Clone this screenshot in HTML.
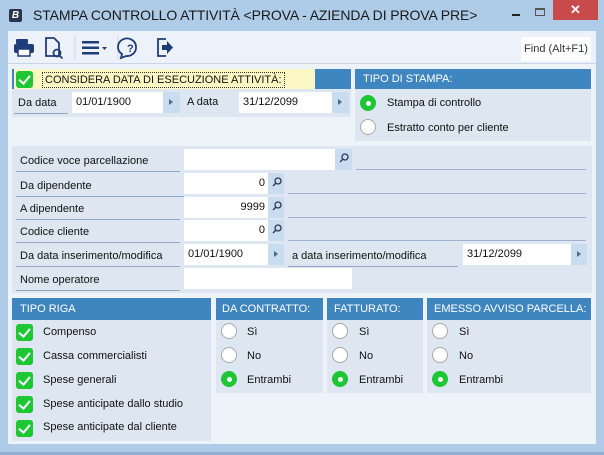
<!DOCTYPE html>
<html><head><meta charset="utf-8"><style>
*{margin:0;padding:0;box-sizing:border-box}
body{width:604px;height:455px;background:#aecbe8;font-family:"Liberation Sans",sans-serif;font-size:11px;color:#111;position:relative;overflow:hidden}
.a{position:absolute;white-space:nowrap}
.hdr{background:#3f86c1;color:#fff;font-size:11px;padding-left:8px;line-height:20px}
.pan{background:#dde6f1}
.inp{background:#fff;padding-left:4px;line-height:21px;font-size:11px}
.btn{background:#c9dcf0}
.btn:after{content:"";position:absolute;left:6px;top:7px;border-left:4px solid #4a6a8a;border-top:3.5px solid transparent;border-bottom:3.5px solid transparent}
.lbl{border-bottom:1px solid #8fa7c7;padding-left:4px;line-height:20px}
.line{border-bottom:1px solid #9fb3cf}
.cb{width:17px;height:17px;background:#1fc634;border-radius:3px}
.cb:after{content:"";position:absolute;left:5px;top:2px;width:5px;height:9px;border:solid #fff;border-width:0 2.2px 2.2px 0;transform:rotate(40deg)}
.rd{width:16px;height:16px;border-radius:50%;background:#fff;border:1.5px solid #a9a9a9}
.rd.on{background:#1fc634;border:none}
.rd.on:after{content:"";position:absolute;left:5.5px;top:5.5px;width:5px;height:5px;border-radius:50%;background:#fff}
.srch{background:#c9dcf0}
</style></head><body>
<!-- title -->
<div class="a" style="left:9px;top:9px;width:13px;height:13px;background:#2a3550;border-radius:2px;color:#fff;font-size:10px;font-style:italic;font-weight:bold;text-align:center;line-height:13px">B</div>
<div class="a" style="left:33px;top:7px;font-size:14px;letter-spacing:-0.1px;color:#1a1a1a">STAMPA CONTROLLO ATTIVITÀ &lt;PROVA - AZIENDA DI PROVA PRE&gt;</div>
<div class="a" style="left:512px;top:14px;width:8px;height:2px;background:#222"></div>
<div class="a" style="left:535px;top:8px;width:10px;height:8px;border:1px solid #555;border-top-width:2px"></div>
<div class="a" style="left:553px;top:0;width:45px;height:20px;background:#c94a4a;color:#fff;text-align:center;font-size:13px;line-height:20px;font-weight:bold">✕</div>
<!-- client -->
<div class="a" style="left:8px;top:31px;width:588px;height:413px;background:#eef3fa"></div>
<div class="a" style="left:8px;top:31px;width:588px;height:33px;background:#edf2fa;border-bottom:1px solid #c8d6e8"></div>
<svg class="a" style="left:12px;top:33px" width="170" height="30" viewBox="0 0 170 30">
<g fill="#1f3d78">
<rect x="4" y="6" width="12" height="5" rx="1"/><rect x="2" y="11" width="20" height="9" rx="2"/><rect x="6" y="16" width="12" height="7" fill="#fff" stroke="#1f3d78" stroke-width="1.5"/>
</g>
<g fill="none" stroke="#1f3d78" stroke-width="1.8"><path d="M34 5h8l5 5v13h-13z"/><circle cx="45" cy="20" r="3.5"/><path d="M47.5 22.5l3 3"/></g>
<line x1="63" y1="3" x2="63" y2="27" stroke="#cbd5e3"/>
<g fill="#1f3d78"><rect x="70" y="8" width="17" height="2.5"/><rect x="70" y="13.5" width="17" height="2.5"/><rect x="70" y="19" width="17" height="2.5"/><path d="M90 14h5l-2.5 3z"/></g>
<line x1="106" y1="3" x2="106" y2="27" stroke="#cbd5e3"/>
<g fill="none" stroke="#1f3d78" stroke-width="1.8"><path d="M124 14a9 8.5 0 1 0-14 7l-1 4 5-2a9 8.5 0 0 0 10-9z"/></g>
<text x="115" y="19" font-size="11" font-weight="bold" fill="#1f3d78" font-family="Liberation Sans">?</text>
<g fill="none" stroke="#1f3d78" stroke-width="1.8"><path d="M154 6h-8v17h8"/></g><path d="M150 12h5v-4l6 6.5-6 6.5v-4h-5z" fill="#1f3d78"/>
</svg>
<div class="a" style="left:521px;top:37px;width:70px;height:24px;background:#fff;font-size:11px;line-height:24px;text-align:center;color:#333">Find (Alt+F1)</div>
<!-- section 1 -->
<div class="a" style="left:12px;top:69px;width:339px;height:20px;background:#3f86c1"></div>
<div class="a" style="left:14px;top:69px;width:301px;height:20px;background:#fdf7c4"></div>
<div class="a cb" style="left:16px;top:71px"></div>
<div class="a" style="left:42px;top:72px;border:1px dotted #333;padding:0 2px;line-height:14px;font-size:11px">CONSIDERA DATA DI ESECUZIONE ATTIVITÀ:</div>
<div class="a pan" style="left:12px;top:89px;width:339px;height:28px"></div>
<div class="a lbl" style="left:14px;top:93px;width:54px">Da data</div>
<div class="a inp" style="left:72px;top:92px;width:92px;height:21px">01/01/1900</div>
<div class="a btn" style="left:163px;top:92px;width:17px;height:21px"></div>
<div class="a" style="left:187px;top:96px">A data</div>
<div class="a inp" style="left:239px;top:92px;width:94px;height:21px">31/12/2099</div>
<div class="a btn" style="left:332px;top:92px;width:17px;height:21px"></div>
<div class="a hdr" style="left:355px;top:69px;width:236px;height:20px">TIPO DI STAMPA:</div>
<div class="a pan" style="left:355px;top:89px;width:236px;height:52px"></div>
<div class="a rd on" style="left:360px;top:95px"></div>
<div class="a" style="left:387px;top:97px">Stampa di controllo</div>
<div class="a rd" style="left:360px;top:119px"></div>
<div class="a" style="left:387px;top:122px">Estratto conto per cliente</div>
<!-- section 2 -->
<div class="a pan" style="left:12px;top:146px;width:580px;height:147px"></div>
<div class="a lbl" style="left:16px;top:151px;width:164px">Codice voce parcellazione</div>
<div class="a inp" style="left:184px;top:149px;width:152px;height:21px"></div>
<div class="a srch" style="left:335px;top:149px;width:17px;height:21px"></div>
<div class="a line" style="left:356px;top:150px;width:230px;height:20px"></div>

<div class="a lbl" style="left:16px;top:176px;width:168px">Da dipendente</div>
<div class="a inp" style="left:184px;top:173px;width:85px;height:21px;text-align:right;padding-right:4px">0</div>
<div class="a srch" style="left:268px;top:173px;width:16px;height:21px"></div>
<div class="a line" style="left:288px;top:174px;width:298px;height:20px"></div>

<div class="a lbl" style="left:16px;top:199px;width:164px">A dipendente</div>
<div class="a inp" style="left:184px;top:197px;width:85px;height:21px;text-align:right;padding-right:4px">9999</div>
<div class="a srch" style="left:268px;top:197px;width:16px;height:21px"></div>
<div class="a line" style="left:288px;top:198px;width:298px;height:20px"></div>

<div class="a lbl" style="left:16px;top:222px;width:164px">Codice cliente</div>
<div class="a inp" style="left:184px;top:220px;width:85px;height:21px;text-align:right;padding-right:4px">0</div>
<div class="a srch" style="left:268px;top:220px;width:16px;height:21px"></div>
<div class="a line" style="left:288px;top:221px;width:298px;height:20px"></div>

<div class="a lbl" style="left:16px;top:246px;width:164px">Da data inserimento/modifica</div>
<div class="a inp" style="left:184px;top:244px;width:85px;height:21px">01/01/1900</div>
<div class="a btn" style="left:268px;top:244px;width:16px;height:21px"></div>
<div class="a lbl" style="left:288px;top:246px;width:170px">a data inserimento/modifica</div>
<div class="a inp" style="left:463px;top:244px;width:109px;height:21px">31/12/2099</div>
<div class="a btn" style="left:571px;top:244px;width:16px;height:21px"></div>

<div class="a lbl" style="left:16px;top:270px;width:164px">Nome operatore</div>
<div class="a inp" style="left:184px;top:268px;width:168px;height:21px"></div>
<!-- magnifier icons -->
<svg class="a" style="left:0;top:0" width="604" height="455">
<g fill="none" stroke="#2c3a55" stroke-width="1.3">
<circle cx="345" cy="157" r="3"/><path d="M343 159l-3 3"/>
<circle cx="278" cy="181" r="3"/><path d="M276 183l-3 3"/>
<circle cx="278" cy="205" r="3"/><path d="M276 207l-3 3"/>
<circle cx="278" cy="228" r="3"/><path d="M276 230l-3 3"/>
</g></svg>
<!-- section 3 -->
<div class="a hdr" style="left:12px;top:298px;width:199px;height:22px;line-height:22px">TIPO RIGA</div>
<div class="a pan" style="left:12px;top:320px;width:199px;height:121px"></div>
<div class="a cb" style="left:16px;top:324px"></div><div class="a" style="left:43px;top:326px">Compenso</div>
<div class="a cb" style="left:16px;top:348px"></div><div class="a" style="left:43px;top:350px">Cassa commercialisti</div>
<div class="a cb" style="left:16px;top:372px"></div><div class="a" style="left:43px;top:374px">Spese generali</div>
<div class="a cb" style="left:16px;top:396px"></div><div class="a" style="left:43px;top:398px">Spese anticipate dallo studio</div>
<div class="a cb" style="left:16px;top:420px"></div><div class="a" style="left:43px;top:421px">Spese anticipate dal cliente</div>

<div class="a hdr" style="left:216px;top:298px;width:107px;height:22px;line-height:22px;padding-left:6px">DA CONTRATTO:</div>
<div class="a pan" style="left:216px;top:320px;width:107px;height:73px"></div>
<div class="a rd" style="left:221px;top:323px"></div><div class="a" style="left:247px;top:326px">Sì</div>
<div class="a rd" style="left:221px;top:347px"></div><div class="a" style="left:247px;top:350px">No</div>
<div class="a rd on" style="left:221px;top:371px"></div><div class="a" style="left:247px;top:374px">Entrambi</div>

<div class="a hdr" style="left:327px;top:298px;width:96px;height:22px;line-height:22px;padding-left:7px">FATTURATO:</div>
<div class="a pan" style="left:327px;top:320px;width:96px;height:73px"></div>
<div class="a rd" style="left:332px;top:323px"></div><div class="a" style="left:359px;top:326px">Sì</div>
<div class="a rd" style="left:332px;top:347px"></div><div class="a" style="left:359px;top:350px">No</div>
<div class="a rd on" style="left:332px;top:371px"></div><div class="a" style="left:359px;top:374px">Entrambi</div>

<div class="a hdr" style="left:427px;top:298px;width:164px;height:22px;line-height:22px;padding-left:7px">EMESSO AVVISO PARCELLA:</div>
<div class="a pan" style="left:427px;top:320px;width:164px;height:73px"></div>
<div class="a rd" style="left:432px;top:323px"></div><div class="a" style="left:459px;top:326px">Sì</div>
<div class="a rd" style="left:432px;top:347px"></div><div class="a" style="left:459px;top:350px">No</div>
<div class="a rd on" style="left:432px;top:371px"></div><div class="a" style="left:459px;top:374px">Entrambi</div>
<div class="a" style="left:0;top:452px;width:604px;height:3px;background:#8eaed3"></div>
</body></html>
